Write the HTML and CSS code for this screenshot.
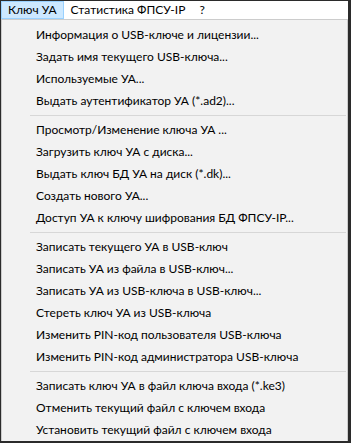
FILE: index.html
```html
<!DOCTYPE html>
<html lang="ru">
<head>
    <meta charset="UTF-8">
    <title>Ключ УА</title>
    <link rel="stylesheet" href="styles.css">
</head>
<body>
    <div class="window">
        <div class="menu-bar">
            <div class="menu-title active">Ключ УА</div>
            <div class="menu-title">Статистика ФПСУ-IP</div>
            <div class="menu-title">?</div>
        </div>

        <div class="dropdown">
            <div class="item">Информация о USB-ключе и лицензии...</div>
            <div class="item">Задать имя текущего USB-ключа...</div>
            <div class="item">Используемые УА...</div>
            <div class="item">Выдать аутентификатор УА (*.ad2)...</div>
            <div class="separator"></div>
            <div class="item">Просмотр/Изменение ключа УА ...</div>
            <div class="item">Загрузить ключ УА с диска...</div>
            <div class="item">Выдать ключ БД УА на диск (*.dk)...</div>
            <div class="item">Создать нового УА...</div>
            <div class="item">Доступ УА к ключу шифрования БД ФПСУ-IP...</div>
            <div class="separator"></div>
            <div class="item">Записать текущего УА в USB-ключ</div>
            <div class="item">Записать УА из файла в USB-ключ...</div>
            <div class="item">Записать УА из USB-ключа в USB-ключ...</div>
            <div class="item">Стереть ключ УА из USB-ключа</div>
            <div class="item">Изменить PIN-код пользователя USB-ключа</div>
            <div class="item">Изменить PIN-код администратора USB-ключа</div>
            <div class="separator"></div>
            <div class="item">Записать ключ УА в файл ключа входа (*.ke3)</div>
            <div class="item">Отменить текущий файл с ключем входа</div>
            <div class="item">Установить текущий файл с ключем входа</div>
        </div>
    </div>
</body>
</html>
```

FILE: styles.css
```css
/* Base */
* {
    margin: 0;
    padding: 0;
    box-sizing: border-box;
}

body {
    font-family: 'Lato', 'Liberation Sans', sans-serif;
    font-size: 12px;
    color: #000;
    background: #2b2b2b;
    width: 351px;
    height: 443px;
    overflow: hidden;
}

/* Window frame */
.window {
    height: 443px;
    border-top: 1px solid #2b2b2b;
    border-left: 1px solid #2b2b2b;
    border-right: 3px solid #2b2b2b;
    border-bottom: 2px solid #2b2b2b;
    background: #fff;
    display: flex;
    flex-direction: column;
}

/* Menu bar */
.menu-bar {
    display: flex;
    height: 18px;
    background: #fff;
}

.menu-title {
    padding: 0 6px;
    line-height: 16px;
    border: 1px solid transparent;
}

.menu-title.active {
    background: #cce8ff;
    border-color: #99d1ff;
}

/* Dropdown */
.dropdown {
    flex-grow: 1;
    background: #f2f2f2;
    border: 1px solid #cccccc;
    border-bottom: none;
    padding-top: 4px;
}

.item {
    height: 22px;
    line-height: 22px;
    padding-left: 34px;
    white-space: nowrap;
}

.separator {
    height: 1px;
    background: #d7d7d7;
    margin: 3px 1px 3px 28px;
}
```
